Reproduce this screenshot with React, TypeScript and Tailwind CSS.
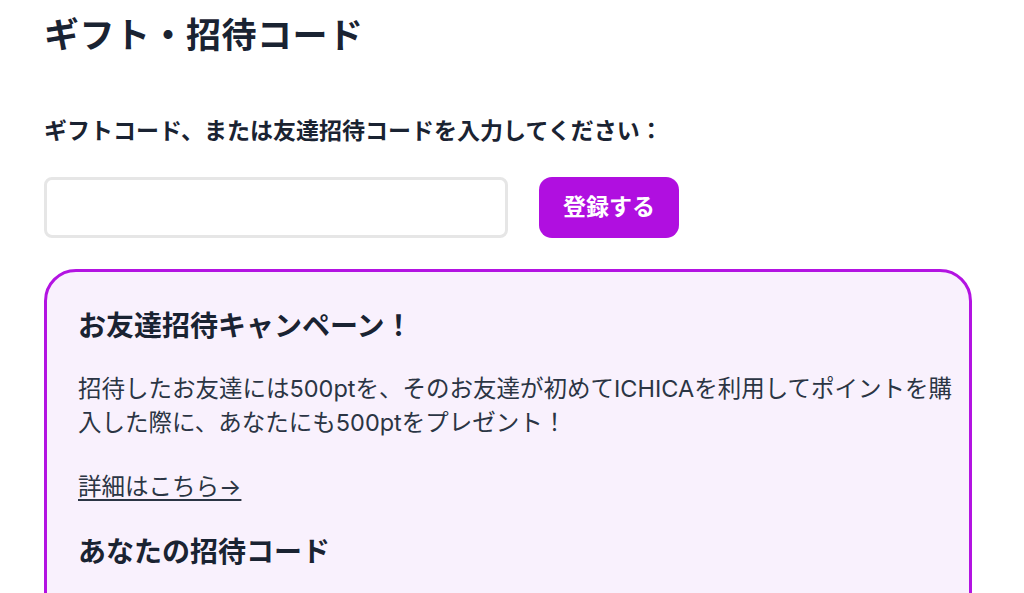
const FONT = "font-['Inter','Noto_Sans_CJK_JP',sans-serif]";

export default function App() {
  return (
    <div className={`${FONT} min-h-[593px] bg-white px-[44px] pt-[5px] text-[#1a2332]`}>
      <h1 className="text-[35px] font-bold leading-[60px] tracking-[0.5px]">
        ギフト・招待コード
      </h1>

      <p className="mt-[49px] text-[23px] font-semibold leading-[34px]">
        ギフトコード、または友達招待コードを入力してください：
      </p>

      <form
        className="mt-[29px] flex gap-[31px]"
        onSubmit={(e) => e.preventDefault()}
      >
        <input
          type="text"
          className="h-[61px] w-[464px] rounded-[8px] border-[3px] border-[#e6e6e6] bg-white px-4 text-[22px] outline-none"
        />
        <button
          type="submit"
          className="h-[61px] w-[140px] rounded-[13px] bg-[#b00fe0] text-[23px] font-semibold text-white"
        >
          登録する
        </button>
      </form>

      <section className="mt-[31px] w-[928px] rounded-[32px] border-[3px] border-[#b313e2] bg-[#f9f1fd] pb-10 pl-[31px] pr-[12px] pt-[34px]">
        <h2 className="text-[28px] font-bold leading-[40px]">
          お友達招待キャンペーン！
        </h2>
        <p className="mt-[26px] text-[23.5px] leading-[34px] text-[#2b3544]">
          招待したお友達には500ptを、そのお友達が初めてICHICAを利用してポイントを購入した際に、あなたにも500ptをプレゼント！
        </p>
        <a
          href="#"
          className="mt-[30px] inline-block text-[23.5px] leading-[34px] text-[#2b3544] underline underline-offset-[4px]"
        >
          詳細はこちら→
        </a>
        <h2 className="mt-[28px] text-[28px] font-bold leading-[40px]">
          あなたの招待コード
        </h2>
        <div className="h-16" />
      </section>
    </div>
  );
}
